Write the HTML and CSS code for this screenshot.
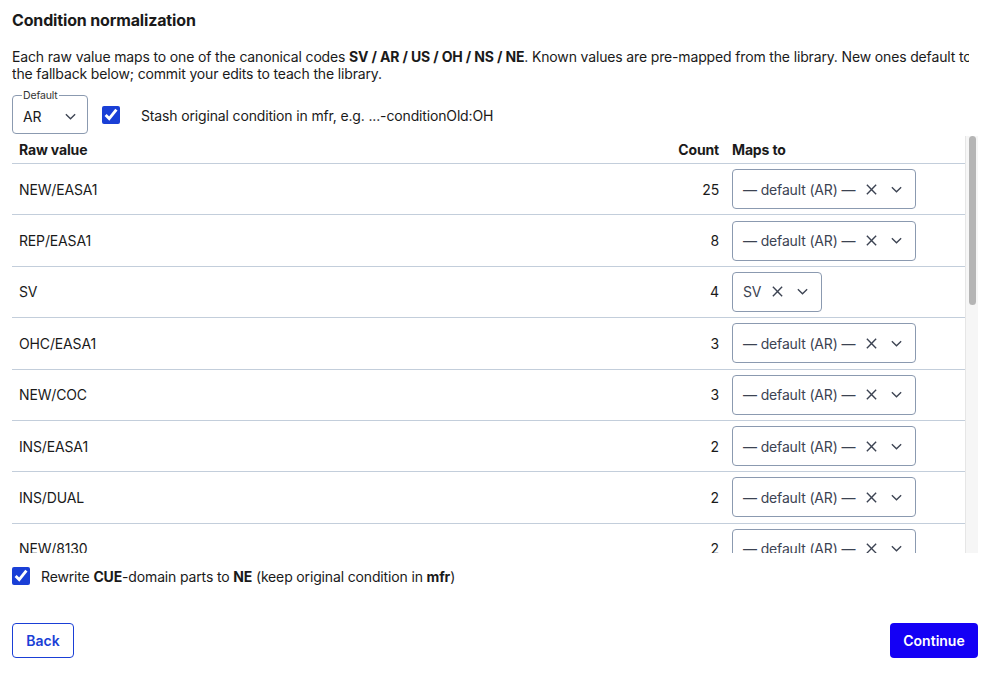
FILE: index.html
```html
<!DOCTYPE html>
<html>
<head>
  <meta charset="UTF-8">
  <title>Condition normalization</title>
  <link rel="stylesheet" href="styles.css">
</head>
<body>
  <div class="page">
    <h2 class="title">Condition normalization</h2>
    <p class="intro">Each raw value maps to one of the canonical codes <b>SV / AR / US / OH / NS / NE</b>. Known values are pre-mapped from the library. New ones default to<br>the fallback below; commit your edits to teach the library.</p>

    <div class="options">
      <fieldset class="default-box">
        <legend>Default</legend>
        <div class="default-select">
          <span>AR</span>
          <svg class="chev" viewBox="0 0 14 14"><path d="M2 4.5 L7 9.5 L12 4.5"/></svg>
        </div>
      </fieldset>
      <label class="check">
        <input type="checkbox" checked>
        <span>Stash original condition in mfr, e.g. ...-conditionOld:OH</span>
      </label>
    </div>

    <div class="table-wrap">
      <div class="table-scroll">
        <table class="map-table">
          <colgroup>
            <col>
            <col class="col-count">
            <col class="col-map">
          </colgroup>
          <thead>
            <tr><th>Raw value</th><th class="num">Count</th><th>Maps to</th></tr>
          </thead>
          <tbody id="rows"></tbody>
        </table>
      </div>
      <div class="scrollbar"><div class="thumb"></div></div>
    </div>

    <label class="check check-bottom">
      <input type="checkbox" checked>
      <span>Rewrite <b>CUE</b>-domain parts to <b>NE</b> (keep original condition in <b>mfr</b>)</span>
    </label>

    <div class="actions">
      <button class="btn btn-outline">Back</button>
      <button class="btn btn-primary">Continue</button>
    </div>
  </div>

  <script src="app.js"></script>
</body>
</html>
```

FILE: app.js
```js
const rows = [
  ['NEW/EASA1', 25, ''],
  ['REP/EASA1', 8, ''],
  ['SV', 4, 'SV'],
  ['OHC/EASA1', 3, ''],
  ['NEW/COC', 3, ''],
  ['INS/EASA1', 2, ''],
  ['INS/DUAL', 2, ''],
  ['NEW/8130', 2, ''],
  ['OH/EASA1', 2, ''],
  ['SV/EASA1', 1, ''],
  ['REP/DUAL', 1, ''],
  ['NS', 1, 'NS'],
  ['US/TAG', 1, ''],
  ['OHC/8130', 1, ''],
  ['NEW/FAA', 1, ''],
  ['INS/8130', 1, ''],
  ['AR/EASA1', 1, 'AR'],
  ['SVC/COC', 1, ''],
  ['MOD/EASA1', 1, '']
];

const xIcon = '<svg class="clear" viewBox="0 0 14 14"><path d="M2 2 L12 12 M12 2 L2 12"/></svg>';
const chevIcon = '<svg class="chev" viewBox="0 0 14 14"><path d="M2 4.5 L7 9.5 L12 4.5"/></svg>';

const tbody = document.getElementById('rows');
tbody.innerHTML = rows.map(([raw, count, code]) => `
  <tr>
    <td>${raw}</td>
    <td class="num">${count}</td>
    <td><div class="combo"><span class="combo-value">${code || '— default (AR) —'}</span>${xIcon}${chevIcon}</div></td>
  </tr>`).join('');
```

FILE: styles.css
```css
body {
  margin: 0;
  font-family: Inter, "Noto Sans", sans-serif;
  font-size: 14px;
  letter-spacing: -0.15px;
  color: #1a1a1a;
  background: white;
}
.page {
  padding: 10px 19px 0 12px;
}
.title {
  margin: 0;
  font-size: 16px;
  line-height: 20px;
  font-weight: 700;
}
.intro {
  margin: 18px 9px 0 0;
  line-height: 17px;
  white-space: nowrap;
  overflow: hidden;
}
.intro b {
  font-weight: 700;
}
.options {
  display: flex;
  align-items: flex-end;
  gap: 14px;
  margin-top: 8px;
}
.default-box {
  margin: 0;
  padding: 0;
  border: 1px solid #8b9ab0;
  border-radius: 4px;
  width: 76px;
  height: 44px;
  box-sizing: border-box;
}
.default-box legend {
  font-size: 10.5px;
  color: #333;
  padding: 0 1px;
  margin-left: 9px;
  line-height: 11px;
}
.default-select {
  display: flex;
  align-items: center;
  justify-content: space-between;
  padding: 0 10px 0 10px;
  height: 31px;
  font-size: 14px;
  color: #1a1a1a;
}
.check {
  display: flex;
  align-items: center;
  gap: 21px;
  cursor: pointer;
}
.options .check {
  height: 38px;
}
.check input {
  margin: 0;
  width: 18px;
  height: 18px;
  accent-color: #1a3fd6;
}
svg.chev, svg.clear {
  width: 13px;
  height: 13px;
  fill: none;
  stroke: #3c4352;
  stroke-width: 1.4;
  flex: none;
}
svg.clear {
  stroke-width: 1.5;
}
.table-wrap {
  display: flex;
  margin-top: 2px;
  height: 417px;
}
.table-scroll {
  flex: 1;
  overflow: hidden;
}
.scrollbar {
  width: 13px;
  flex: none;
  background: #f6f6f6;
  border-left: 1px solid #e6e6e6;
  padding: 0 2px 0 3px;
  box-sizing: border-box;
}
.thumb {
  height: 169px;
  background: #b5b5b5;
  border-radius: 4px;
}
.map-table {
  width: 100%;
  border-collapse: collapse;
  table-layout: fixed;
}
.col-count {
  width: 62px;
}
.col-map {
  width: 239px;
}
.map-table th {
  text-align: left;
  font-weight: 700;
  padding: 6px 7px 5px 7px;
  line-height: 16px;
  border-bottom: 1px solid #c3cedb;
}
.map-table td {
  padding: 5.2px 7px;
  border-bottom: 1px solid #c3cedb;
  vertical-align: middle;
  white-space: nowrap;
}
.map-table .num {
  text-align: right;
}
.map-table th:last-child, .map-table td:last-child {
  padding-left: 6px;
}
.combo {
  display: inline-flex;
  align-items: center;
  height: 40px;
  box-sizing: border-box;
  border: 1px solid #8b9ab0;
  border-radius: 4px;
  padding: 0 12px 0 10px;
  color: #3c4352;
}
.combo-value {
  margin-right: 10px;
}
.combo .clear {
  margin-right: 12px;
}
.check-bottom {
  margin-top: 14px;
  gap: 11px;
}
.actions {
  display: flex;
  justify-content: space-between;
  margin-top: 38px;
}
.btn {
  font-family: Inter, "Noto Sans", sans-serif;
  font-size: 14px;
  font-weight: 600;
  height: 35px;
  padding: 0;
  border-radius: 4px;
  cursor: pointer;
}
.btn-outline {
  background: white;
  color: #1a3fd6;
  border: 1.5px solid #1a3fd6;
  width: 62px;
}
.btn-primary {
  background: #1400f5;
  color: white;
  border: none;
  width: 88px;
}
```
